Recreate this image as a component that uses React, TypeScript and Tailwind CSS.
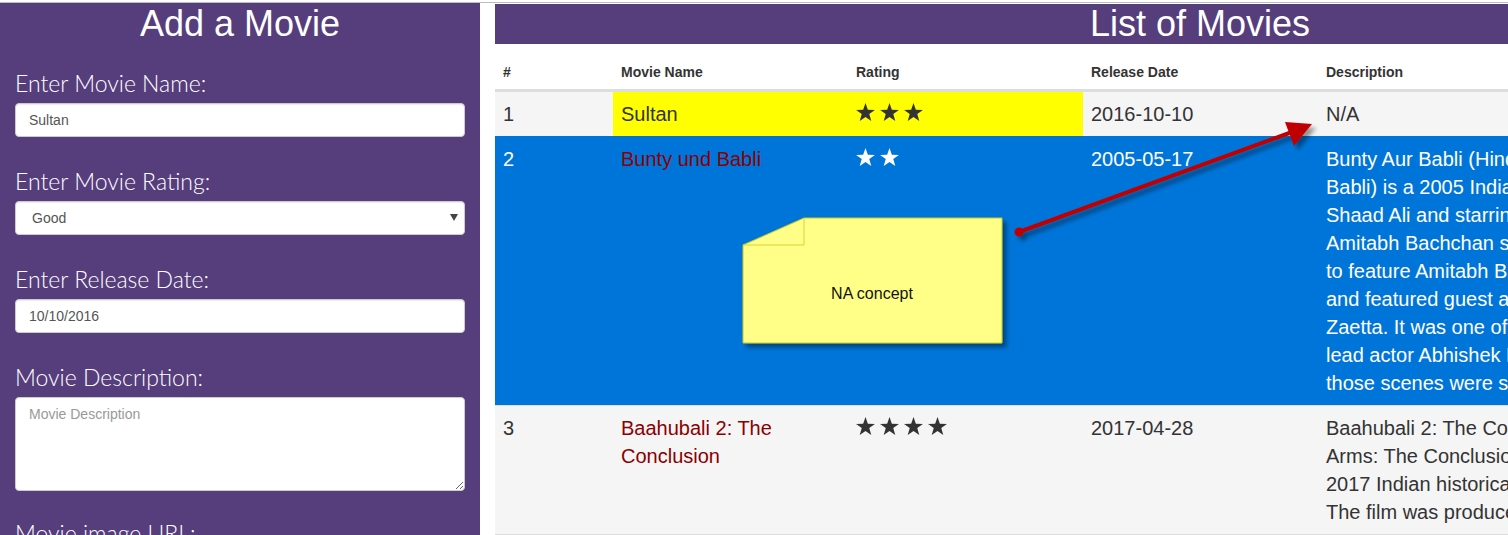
import React from 'react'

type Movie = {
  id: number
  name: string
  rating: number
  date: string
  lines: string[]
  tone: 'plain' | 'picked' | 'active'
}

const MOVIES: Movie[] = [
  { id: 1, name: 'Sultan', rating: 3, date: '2016-10-10', lines: ['N/A'], tone: 'picked' },
  {
    id: 2,
    name: 'Bunty und Babli',
    rating: 2,
    date: '2005-05-17',
    tone: 'active',
    lines: [
      'Bunty Aur Babli (Hindi for: Bunty and',
      'Babli) is a 2005 Indian crime comedy film directed by',
      'Shaad Ali and starring Rani Mukerji, Abhishek Bachchan and',
      'Amitabh Bachchan side by side. It was the first film',
      'to feature Amitabh Bachchan and Abhishek Bachchan together',
      'and featured guest appearance of Aishwarya Rai and Lara',
      'Zaetta. It was one of the earliest films in which the',
      'lead actor Abhishek Bachchan had an all-night shooting;',
      'those scenes were shot in Kanpur and Lucknow.',
    ],
  },
  {
    id: 3,
    name: 'Baahubali 2: The Conclusion',
    rating: 4,
    date: '2017-04-28',
    tone: 'plain',
    lines: [
      'Baahubali 2: The Conclusion (transl. The One with Strong',
      'Arms: The Conclusion) is a',
      '2017 Indian historical fiction film directed by S. S. Rajamouli.',
      'The film was produced by Shobu Yarlagadda and Prasad Devineni.',
    ],
  },
]

function Stars({ count, light }: { count: number; light: boolean }) {
  return (
    <div className="flex h-[28px] items-center gap-[5px] pb-[4px]">
      {Array.from({ length: count }).map((_, i) => (
        <svg key={i} width="19" height="18" viewBox="0 0 24 23">
          <polygon
            points="12,0 15,8.6 24,8.8 16.8,14.2 19.4,23 12,17.8 4.6,23 7.2,14.2 0,8.8 9,8.6"
            fill={light ? '#ffffff' : '#333333'}
          />
        </svg>
      ))}
    </div>
  )
}

function Field({ label, children, last }: { label: string; children: React.ReactNode; last?: boolean }) {
  return (
    <div className={last ? 'mb-[27px]' : 'mb-[29px]'}>
      <div className="mb-[5px] text-[23px] font-light leading-[30px] text-white [font-family:Lato,'Open_Sans',sans-serif]">
        {label}
      </div>
      {children}
    </div>
  )
}

const inputCls =
  'block h-[34px] w-full rounded-[4px] border border-[#cccccc] bg-white px-[13px] text-[14px] text-[#555555] outline-none shadow-[inset_0_1px_1px_rgba(0,0,0,0.075)]'

export default function App() {
  return (
    <div className="relative h-[535px] w-[1508px] overflow-hidden bg-white pt-[2px] [font-family:'Liberation_Sans',Arial,sans-serif]">
      <div className="flex h-full border-t border-[#bdbdbd]">
        {/* form */}
        <div className="h-full w-[480px] shrink-0 bg-[#563d7c] px-[15px] pt-[1px]">
          <h1 className="mb-[24px] text-center text-[36px] font-normal leading-[40px] text-white">Add a Movie</h1>
          <Field label="Enter Movie Name:">
            <input className={inputCls} defaultValue="Sultan" readOnly />
          </Field>
          <Field label="Enter Movie Rating:">
            <div className="relative">
              <select className={inputCls + ' appearance-none pl-[16px]'} defaultValue="Good">
                <option>Bad</option>
                <option>Average</option>
                <option>Good</option>
                <option>Excellent</option>
              </select>
              <svg className="pointer-events-none absolute right-[7px] top-[13px]" width="8" height="7" viewBox="0 0 8 7">
                <polygon points="0,0 8,0 4,7" fill="#444444" />
              </svg>
            </div>
          </Field>
          <Field label="Enter Release Date:">
            <input className={inputCls} defaultValue="10/10/2016" readOnly />
          </Field>
          <Field label="Movie Description:" last>
            <textarea
              className="block h-[94px] w-full rounded-[4px] border border-[#cccccc] bg-white px-[13px] py-[6px] text-[14px] leading-[20px] text-[#555555] outline-none placeholder:text-[#999999]"
              placeholder="Movie Description"
            />
          </Field>
          <div className="text-[23px] font-light leading-[30px] text-white [font-family:Lato,'Open_Sans',sans-serif]">
            Movie image URL:
          </div>
        </div>

        {/* list */}
        <div className="flex-1 overflow-hidden pl-[15px] pt-[1px]">
          <div className="h-[40px] w-[1410px] bg-[#563d7c] text-center text-[36px] leading-[40px] text-white">
            List of Movies
          </div>
          <table className="w-[1410px] table-fixed border-separate border-spacing-0 text-[#333333]">
            <thead>
              <tr className="text-left text-[14px] font-bold leading-[20px]">
                <th className="w-[118px] border-b-2 border-[#dddddd] px-[8px] pb-[7px] pt-[18px]">#</th>
                <th className="w-[235px] border-b-2 border-[#dddddd] px-[8px] pb-[7px] pt-[18px]">Movie Name</th>
                <th className="w-[235px] border-b-2 border-[#dddddd] px-[8px] pb-[7px] pt-[18px]">Rating</th>
                <th className="w-[235px] border-b-2 border-[#dddddd] px-[8px] pb-[7px] pt-[18px]">Release Date</th>
                <th className="border-b-2 border-[#dddddd] px-[8px] pb-[7px] pt-[18px]">Description</th>
              </tr>
            </thead>
            <tbody className="text-[20px] leading-[28px]">
              {MOVIES.map((m, idx) => {
                const active = m.tone === 'active'
                const base = active
                  ? 'bg-[#0075d9] text-white border-t border-[#0075d9]'
                  : 'bg-[#f5f5f5] border-t border-[#dddddd]'
                const lastCls = idx === MOVIES.length - 1 ? ' border-b' : ''
                const cell = 'align-top px-[8px] py-[8px] ' + base + lastCls
                const pick = m.tone === 'picked' ? ' !bg-[#ffff00]' : ''
                const nameColor = m.tone === 'picked' ? ' !text-[#333333]' : ' !text-[#8b0000]'
                return (
                  <tr key={m.id}>
                    <td className={cell}>{m.id}</td>
                    <td className={cell + pick + nameColor}>{m.name}</td>
                    <td className={cell + pick}>
                      <Stars count={m.rating} light={active} />
                    </td>
                    <td className={cell}>{m.date}</td>
                    <td className={cell + ' whitespace-nowrap'}>
                      {m.lines.map((l, i) => (
                        <div key={i}>{l}</div>
                      ))}
                    </td>
                  </tr>
                )
              })}
            </tbody>
          </table>
        </div>
      </div>

      {/* annotation: note + arrow */}
      <svg className="pointer-events-none absolute left-0 top-0" width="1508" height="535" viewBox="0 0 1508 535">
        <defs>
          <filter id="sh" x="-20%" y="-20%" width="140%" height="140%">
            <feDropShadow dx="4" dy="4" stdDeviation="2" floodColor="#000000" floodOpacity="0.4" />
          </filter>
        </defs>
        <g filter="url(#sh)">
          <polygon points="743,245 804,218 1002,218 1002,343 743,343" fill="#ffff88" stroke="#c8c81e" strokeWidth="1" />
        </g>
        <polyline points="743,245 804,245 804,218" fill="none" stroke="#d4d43a" strokeWidth="1" />
        <text x="872" y="299" textAnchor="middle" fontSize="16" fill="#111111" fontFamily="'Liberation Sans', Arial, sans-serif">
          NA concept
        </text>
        <g filter="url(#sh)">
          <line x1="1019" y1="232" x2="1292" y2="132" stroke="#c00000" strokeWidth="4" />
          <circle cx="1019" cy="232" r="4.5" fill="#c00000" />
          <polygon points="1312,124 1285,122 1294,146" fill="#c00000" />
        </g>
      </svg>
    </div>
  )
}
